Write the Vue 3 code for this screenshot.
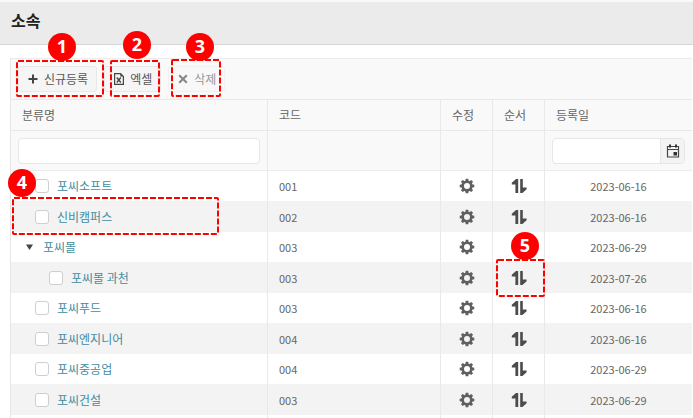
<script setup>
import { ref } from 'vue'

const rows = ref([
  { name: '포씨소프트', code: '001', date: '2023-06-16', kind: 'leaf', sortable: true },
  { name: '신비캠퍼스', code: '002', date: '2023-06-16', kind: 'leaf', sortable: true },
  { name: '포씨몰', code: '003', date: '2023-06-29', kind: 'parent', sortable: false },
  { name: '포씨몰 과천', code: '003', date: '2023-07-26', kind: 'child', sortable: true },
  { name: '포씨푸드', code: '003', date: '2023-06-16', kind: 'leaf', sortable: true },
  { name: '포씨엔지니어', code: '004', date: '2023-06-16', kind: 'leaf', sortable: true },
  { name: '포씨중공업', code: '004', date: '2023-06-29', kind: 'leaf', sortable: true },
  { name: '포씨건설', code: '003', date: '2023-06-29', kind: 'leaf', sortable: true }
])

const teeth = [0, 45, 90, 135, 180, 225, 270, 315]
const marks = [1, 2, 3, 4, 5]
</script>

<template>
  <div class="page">
    <header class="title-bar">
      <h1>소속</h1>
    </header>

    <main class="panel">
      <div class="toolbar">
        <button type="button" class="tool">
          <svg class="tool-icon" viewBox="0 0 10 12"><path d="M5 1.5v9M0.5 6h9" stroke="#444" stroke-width="2" fill="none" /></svg>
          <span>신규등록</span>
        </button>
        <button type="button" class="tool">
          <svg class="tool-icon" viewBox="0 0 10 12">
            <path d="M0.6 0.6h6l2.8 2.8v8H0.6z" stroke="#444" stroke-width="1.2" fill="none" />
            <path d="M6.3 0.6v3h3z" fill="#444" />
            <path d="M2.8 4.5l4 5M6.8 4.5l-4 5" stroke="#444" stroke-width="1.4" fill="none" />
          </svg>
          <span>엑셀</span>
        </button>
        <button type="button" class="tool" disabled>
          <svg class="tool-icon" viewBox="0 0 10 12"><path d="M1.2 2.2l7.6 7.6M8.8 2.2l-7.6 7.6" stroke="#868686" stroke-width="2" fill="none" /></svg>
          <span>삭제</span>
        </button>
      </div>

      <table>
        <colgroup>
          <col />
          <col class="col-code" />
          <col class="col-icon" />
          <col class="col-icon" />
          <col class="col-date" />
        </colgroup>
        <thead>
          <tr class="labels">
            <th scope="col">분류명</th>
            <th scope="col">코드</th>
            <th scope="col">수정</th>
            <th scope="col">순서</th>
            <th scope="col">등록일</th>
          </tr>
          <tr class="filters">
            <td><input class="field" type="text" aria-label="분류명" /></td>
            <td></td>
            <td></td>
            <td></td>
            <td>
              <div class="date-field">
                <input type="text" aria-label="등록일" />
                <button type="button" aria-label="달력">
                  <svg viewBox="0 0 14 14">
                    <path d="M1.5 2.5h11v10.5h-11zM1.5 5.5h11" stroke="#444" stroke-width="1.2" fill="none" />
                    <path d="M3 0.5h2v3H3zM9 0.5h2v3H9zM7.5 8h3.5v3.5H7.5z" fill="#333" />
                  </svg>
                </button>
              </div>
            </td>
          </tr>
        </thead>
        <tbody>
          <tr v-for="(row, i) in rows" :key="i">
            <td>
              <div class="name" :class="row.kind">
                <button v-if="row.kind === 'parent'" type="button" class="toggle" aria-label="접기">
                  <svg viewBox="0 0 7 6"><path d="M0 0.5h7L3.5 6z" fill="#444" /></svg>
                </button>
                <input v-else :id="'row-' + i" type="checkbox" :aria-label="row.name" />
                <a href="#">{{ row.name }}</a>
              </div>
            </td>
            <td class="code">{{ row.code }}</td>
            <td class="action">
              <button type="button" aria-label="수정">
                <svg viewBox="0 0 16 16">
                  <circle cx="8" cy="8" r="4.3" fill="none" stroke="#606060" stroke-width="2.6" />
                  <path v-for="a in teeth" :key="a" d="M6.7 0.7h2.6l0.4 2.8H6.3z" :transform="`rotate(${a} 8 8)`" fill="#606060" />
                </svg>
              </button>
            </td>
            <td class="action">
              <button v-if="row.sortable" type="button" aria-label="순서">
                <svg viewBox="0 0 16 16">
                  <path d="M7.2 15H4.4V6.6H0.8V4.8L5 1h2.2zM9.2 1h2.6v8.4h3.8v1.8L11.4 15H9.2z" fill="#4c4c4c" />
                </svg>
              </button>
            </td>
            <td class="date">{{ row.date }}</td>
          </tr>
          <tr class="rest"><td></td><td></td><td></td><td></td><td></td></tr>
        </tbody>
      </table>
    </main>

    <div v-for="n in marks" :key="n" class="mark" :class="'mark-' + n">
      <svg class="outline"><rect x="1" y="1" rx="1" /></svg>
      <span class="badge">{{ n }}</span>
    </div>
  </div>
</template>

<style>
body {
  margin: 0;
  background: #fff;
}
</style>

<style scoped>
.page {
  position: relative;
  overflow: hidden;
  font-family: "Noto Sans CJK KR", "Noto Sans", sans-serif;
  font-size: 12px;
  line-height: 16px;
  color: #666;
}
.page * {
  box-sizing: border-box;
}
button,
input {
  margin: 0;
  padding: 0;
  font: inherit;
  color: inherit;
}
svg {
  display: block;
}
.title-bar {
  height: 45px;
  padding: 8px 11px 0;
  background: #ebebeb;
  border-top: 2px solid #f8f8f8;
  border-bottom: 1px solid #d6d6d6;
}
h1 {
  margin: 0;
  font-size: 16px;
  line-height: 20px;
  font-weight: 700;
  color: #222;
}
.panel {
  margin: 13px 1px 0 10px;
  border-top: 1px solid #ececec;
  border-left: 1px solid #e6e6e6;
}
.toolbar {
  display: flex;
  gap: 7px;
  height: 41px;
  padding: 7px 7px 6px;
  background: #f9f9f9;
  border-bottom: 1px solid #e8e8e8;
}
.tool {
  display: flex;
  align-items: center;
  gap: 6px;
  height: 26px;
  padding: 0 8px 0 9px;
  color: #555;
  background: #f5f5f5;
  border: 1px solid #e8e8e8;
  border-radius: 3px;
}
.tool:disabled {
  color: #999;
  background: #f8f8f8;
  border-color: #f1f1f1;
}
.tool-icon {
  width: 10px;
  height: 12px;
}
table {
  width: 100%;
  table-layout: fixed;
  border-collapse: separate;
  border-spacing: 0;
}
.col-code {
  width: 173px;
}
.col-icon {
  width: 52px;
}
.col-date {
  width: 147px;
}
th,
td {
  padding: 0;
  border-right: 1px solid #e9e9e9;
}
th:last-child,
td:last-child {
  border-right: 0;
}
.labels th {
  height: 31px;
  padding-left: 11px;
  text-align: left;
  font-weight: 400;
  background: #f9f9f9;
  border-bottom: 1px solid #e8e8e8;
}
.filters td {
  height: 40px;
  padding: 0 7px;
  background: #f9f9f9;
  border-bottom: 1px solid #ececec;
}
.field,
.date-field {
  display: flex;
  width: 100%;
  height: 26px;
  background: #fff;
  border: 1px solid #e6e6e6;
  border-radius: 4px;
  overflow: hidden;
}
.date-field input {
  flex: 1;
  min-width: 0;
  background: none;
  border: 0;
}
.date-field button {
  display: flex;
  align-items: center;
  justify-content: center;
  width: 24px;
  background: #f3f3f3;
  border: 0;
  border-left: 1px solid #e6e6e6;
}
.date-field svg {
  width: 14px;
  height: 14px;
}
tbody td {
  height: 30px;
}
tbody tr:nth-child(even) td {
  height: 31px;
  background: #f3f3f3;
}
tbody tr.rest td {
  height: 3px;
  background: #fff;
}
.name {
  display: flex;
  align-items: center;
  gap: 8px;
  padding-left: 24px;
}
.name.child {
  padding-left: 38px;
}
.name.parent {
  gap: 10px;
  padding-left: 15px;
}
.name a {
  color: #3f8ca0;
  text-decoration: none;
}
.name input {
  appearance: none;
  width: 14px;
  height: 14px;
  background: #fff;
  border: 1px solid #cfcfcf;
  border-radius: 3px;
}
.toggle,
.action button {
  background: none;
  border: 0;
}
.toggle svg {
  width: 7px;
  height: 6px;
}
.action button {
  display: block;
  margin: 0 auto;
}
.action svg {
  width: 16px;
  height: 16px;
}
.code {
  padding-left: 11px;
  font-size: 11px;
}
.date {
  text-align: center;
  font-size: 11px;
}
.mark {
  position: absolute;
  pointer-events: none;
}
.outline {
  width: 100%;
  height: 100%;
}
.outline rect {
  width: calc(100% - 2px);
  height: calc(100% - 2px);
  fill: none;
  stroke: #f00;
  stroke-width: 2;
  stroke-dasharray: 6 2;
}
.badge {
  position: absolute;
  width: 28px;
  height: 28px;
  border-radius: 50%;
  background: #f00;
  color: #fff;
  font-family: "Open Sans", "Noto Sans", sans-serif;
  font-size: 18px;
  font-weight: 700;
  line-height: 27px;
  text-align: center;
}
.mark-1 {
  left: 16px;
  top: 60px;
  width: 88px;
  height: 37px;
}
.mark-1 .badge {
  left: 32px;
  top: -27px;
}
.mark-2 {
  left: 110px;
  top: 60px;
  width: 50px;
  height: 37px;
}
.mark-2 .badge {
  left: 13px;
  top: -29px;
}
.mark-3 {
  left: 171px;
  top: 59px;
  width: 50px;
  height: 38px;
}
.mark-3 .badge {
  left: 15px;
  top: -26px;
}
.mark-4 {
  left: 12px;
  top: 197px;
  width: 207px;
  height: 38px;
}
.mark-4 .badge {
  left: -4px;
  top: -28px;
}
.mark-5 {
  left: 496px;
  top: 259px;
  width: 49px;
  height: 38px;
}
.mark-5 .badge {
  left: 15px;
  top: -27px;
}
</style>
